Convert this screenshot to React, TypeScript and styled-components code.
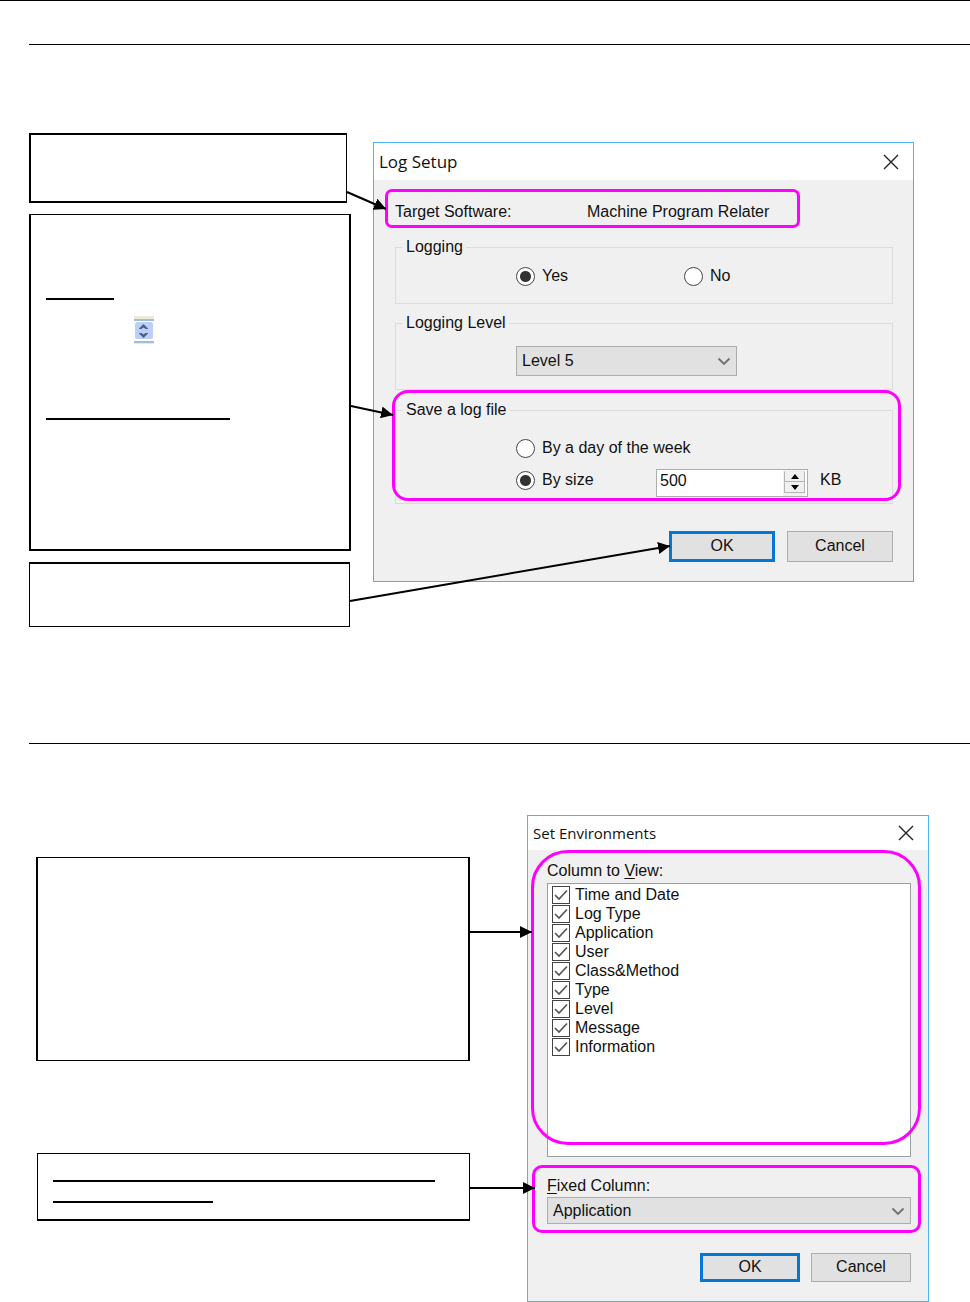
import React, { useId, useState } from 'react';
import styled, { createGlobalStyle } from 'styled-components';

const GlobalStyle = createGlobalStyle`
  *, *::before, *::after { box-sizing: border-box; }
  body {
    margin: 0;
    background: #fff;
    color: #111;
    font-family: "Liberation Sans", Arial, sans-serif;
    font-size: 16px;
    line-height: 22px;
  }
  button, input, select { font: inherit; color: inherit; margin: 0; }
`;

const Page = styled.main`
  border-top: 1px solid #000;
  padding: 43px 0 0 29px;
  overflow: hidden;
`;

const Section = styled.section<{ $gap: number }>`
  border-top: 1px solid #000;
  padding: ${p => p.$gap}px 0 0;
`;

const Stage = styled.div<{ $columns: string; $bottom: number }>`
  position: relative;
  display: grid;
  grid-template-columns: ${p => p.$columns};
  align-items: start;
  padding-bottom: ${p => p.$bottom}px;
`;

const Callouts = styled.div<{ $top: number; $gap: number; $right?: number }>`
  display: flex;
  flex-direction: column;
  align-items: ${p => (p.$right ? 'flex-end' : 'flex-start')};
  gap: ${p => p.$gap}px;
  padding: ${p => p.$top}px ${p => p.$right ?? 0}px 0 0;
`;

const Callout = styled.aside<{ $width: number; $height: number; $lines: string; $pad?: string }>`
  width: ${p => p.$width}px;
  min-height: ${p => p.$height}px;
  border: solid #000;
  border-width: ${p => p.$lines};
  padding: ${p => p.$pad ?? '0'};
  background: #fff;
`;

const Underline = styled.div<{ $width: number; $after: number }>`
  width: ${p => p.$width}px;
  height: 2px;
  margin-bottom: ${p => p.$after}px;
  background: #000;
`;

const SpinPicture = styled.svg`
  display: block;
  margin: 0 0 74px 88px;
`;

const Arrows = styled.svg`
  position: absolute;
  left: 0;
  top: 0;
  width: 100%;
  height: 100%;
  overflow: visible;
  pointer-events: none;
  z-index: 2;
`;

const Dialog = styled.form<{ $top: number }>`
  position: relative;
  margin-top: ${p => p.$top}px;
  border: 1px solid #4db2f0;
  background: #f0f0f0;
`;

const TitleBar = styled.header<{ $height: number }>`
  display: flex;
  align-items: center;
  justify-content: space-between;
  height: ${p => p.$height}px;
  padding: 0 14px 0 5px;
  background: #fff;
`;

const Title = styled.h2<{ $size: number }>`
  margin: 0;
  font: 400 ${p => p.$size}px/22px "Open Sans", "Noto Sans", sans-serif;
`;

const CloseButton = styled.button`
  display: flex;
  padding: 0;
  border: 0;
  background: none;
`;

const Body = styled.div<{ $pad: string }>`
  padding: ${p => p.$pad};
`;

const Highlight = styled.div<{ $box: string; $radius: number }>`
  position: absolute;
  inset: ${p => p.$box};
  border: 3px solid #f0f;
  border-radius: ${p => p.$radius}px;
  pointer-events: none;
  z-index: 1;
`;

const TargetRow = styled.div`
  display: grid;
  grid-template-columns: 192px 1fr;
  margin-bottom: 14px;
`;

const Group = styled.fieldset<{ $after: number }>`
  min-width: 0;
  margin: 0 0 ${p => p.$after}px;
  border: 1px solid #dcdcdc;
  padding: 0;
`;

const Legend = styled.legend`
  margin-left: 7px;
  padding: 0 3px;
  line-height: 20px;
`;

const GroupBody = styled.div<{ $top: number; $bottom: number }>`
  padding: ${p => p.$top}px 0 ${p => p.$bottom}px 120px;
`;

const OptionRow = styled.div`
  display: flex;
  & + & { margin-top: 10px; }
`;

const Option = styled.label<{ $width?: number }>`
  display: flex;
  align-items: center;
  gap: 7px;
  height: 22px;
  width: ${p => (p.$width ? p.$width + 'px' : 'auto')};
`;

const Radio = styled.input.attrs({ type: 'radio' })`
  appearance: none;
  width: 19px;
  height: 19px;
  border: 1px solid #444;
  border-radius: 50%;
  background: #fff;
  &:checked { background: radial-gradient(circle, #333 5px, #fff 6px); }
`;

const SelectFrame = styled.div<{ $width: string; $height: number }>`
  display: grid;
  align-items: center;
  width: ${p => p.$width};
  height: ${p => p.$height}px;
  & > * { grid-area: 1 / 1; }
  & > svg { justify-self: end; margin-right: 5px; pointer-events: none; }
`;

const Select = styled.select`
  appearance: none;
  width: 100%;
  height: 100%;
  padding: 0 24px 0 5px;
  border: 1px solid #adadad;
  border-radius: 0;
  background: #e1e1e1;
`;

const SizeField = styled.div`
  display: flex;
  width: 152px;
  height: 28px;
  border: 1px solid #abadb3;
  padding-right: 2px;
  background: #fff;
`;

const SizeInput = styled.input`
  flex: 1;
  min-width: 0;
  height: 22px;
  padding: 0 3px;
  border: 0;
  background: none;
`;

const Stepper = styled.div`
  display: flex;
  flex-direction: column;
  width: 22px;
  padding: 1px 0 3px 1px;
  background: #f0f0f0;
`;

const StepButton = styled.button`
  display: flex;
  flex: 1;
  align-items: center;
  justify-content: center;
  padding: 0;
  border: 1px solid #b4b4b4;
  border-top-color: #eee;
  background: #f0f0f0;
`;

const Unit = styled.span`
  margin-left: 12px;
`;

const Actions = styled.footer<{ $gap: number }>`
  display: flex;
  justify-content: flex-end;
  gap: ${p => p.$gap}px;
`;

const Button = styled.button<{ $width: number; $height: number; $primary?: boolean }>`
  width: ${p => p.$width}px;
  height: ${p => p.$height}px;
  padding: 0 0 2px;
  border: ${p => (p.$primary ? '3px solid #0078d7' : '1px solid #adadad')};
  background: #e1e1e1;
  line-height: 22px;
`;

const FieldLabel = styled.label`
  display: block;
  height: 22px;
`;

const FieldHeading = styled.div`
  height: 22px;
`;

const Key = styled.span`
  text-decoration: underline;
  text-underline-offset: 2px;
`;

const ColumnList = styled.ul`
  height: 274px;
  margin: 1px 0 18px;
  padding: 1px 4px;
  border: 1px solid #9a9ea5;
  background: #fff;
  list-style: none;
`;

const ColumnItem = styled.label`
  display: flex;
  align-items: center;
  gap: 5px;
  height: 19px;
  line-height: 19px;
`;

const CheckFrame = styled.span`
  display: grid;
  & > * { grid-area: 1 / 1; }
  & > svg { visibility: hidden; pointer-events: none; }
  & > input:checked + svg { visibility: visible; }
`;

const CheckInput = styled.input.attrs({ type: 'checkbox' })`
  appearance: none;
  width: 18px;
  height: 18px;
  border: 1px solid #444;
  background: #fff;
`;

const FixedColumn = styled.div`
  margin-bottom: 29px;
`;

const CloseGlyph = () => (
  <svg width="16" height="16" viewBox="0 0 16 16" fill="none" stroke="#222" strokeWidth="1.4">
    <path d="M1 1 15 15M15 1 1 15" />
  </svg>
);

const Chevron = () => (
  <svg width="16" height="10" viewBox="0 0 16 10" fill="none" stroke="#707070" strokeWidth="1.8">
    <path d="M2.500 2.500 8 8 13.500 2.500" />
  </svg>
);

function Arrow({ lines }: { lines: string[] }) {
  const id = useId();
  return (
    <Arrows aria-hidden="true">
      <defs>
        <marker id={id} markerUnits="userSpaceOnUse" markerWidth="12" markerHeight="12" refX="12" refY="6" orient="auto">
          <path d="M0 0 12 6 0 12Z" />
        </marker>
      </defs>
      {lines.map(d => (
        <path key={d} d={d} stroke="#000" strokeWidth="2" fill="none" markerEnd={`url(#${id})`} />
      ))}
    </Arrows>
  );
}

function DialogTitle({ children, height, size }: { children: string; height: number; size: number }) {
  return (
    <TitleBar $height={height}>
      <Title $size={size}>{children}</Title>
      <CloseButton type="button" aria-label="Close"><CloseGlyph /></CloseButton>
    </TitleBar>
  );
}

function LogSetup() {
  const [size, setSize] = useState(500);
  return (
    <Dialog $top={9} aria-label="Log Setup" onSubmit={e => e.preventDefault()}>
      <DialogTitle height={37} size={17}>Log Setup</DialogTitle>
      <Body $pad="21px 20px 19px 21px">
        <TargetRow>
          <span>Target Software:</span>
          <span>Machine Program Relater</span>
        </TargetRow>
        <Group $after={9}>
          <Legend>Logging</Legend>
          <GroupBody $top={8} $bottom={16}>
            <OptionRow>
              <Option $width={168}><Radio name="logging" defaultChecked />Yes</Option>
              <Option><Radio name="logging" />No</Option>
            </OptionRow>
          </GroupBody>
        </Group>
        <Group $after={10}>
          <Legend>Logging Level</Legend>
          <GroupBody $top={13} $bottom={13}>
            <SelectFrame $width="221px" $height={30}>
              <Select aria-label="Logging Level" defaultValue="Level 5">
                {[1, 2, 3, 4, 5].map(n => <option key={n}>{`Level ${n}`}</option>)}
              </Select>
              <Chevron />
            </SelectFrame>
          </GroupBody>
        </Group>
        <Group $after={27}>
          <Legend>Save a log file</Legend>
          <GroupBody $top={17} $bottom={6}>
            <OptionRow>
              <Option><Radio name="save" />By a day of the week</Option>
            </OptionRow>
            <OptionRow>
              <Option $width={140}><Radio name="save" defaultChecked />By size</Option>
              <SizeField>
                <SizeInput
                  aria-label="Log file size in KB"
                  value={size}
                  onChange={e => setSize(Number(e.target.value) || 0)}
                />
                <Stepper>
                  <StepButton type="button" aria-label="Increase" onClick={() => setSize(size + 1)}>
                    <svg width="8" height="5" viewBox="0 0 8 5"><path d="M4 0 8 5H0Z" /></svg>
                  </StepButton>
                  <StepButton type="button" aria-label="Decrease" onClick={() => setSize(size - 1)}>
                    <svg width="8" height="5" viewBox="0 0 8 5"><path d="M0 0H8L4 5Z" /></svg>
                  </StepButton>
                </Stepper>
              </SizeField>
              <Unit>KB</Unit>
            </OptionRow>
          </GroupBody>
        </Group>
        <Actions $gap={12}>
          <Button $width={106} $height={31} $primary>OK</Button>
          <Button $width={106} $height={31} type="button">Cancel</Button>
        </Actions>
      </Body>
      <Highlight $box="46px 113px 353px 11px" $radius={7} />
      <Highlight $box="247px 12px 80px 18px" $radius={16} />
    </Dialog>
  );
}

const columns = ['Time and Date', 'Log Type', 'Application', 'User', 'Class&Method', 'Type', 'Level', 'Message', 'Information'];

function SetEnvironments() {
  return (
    <Dialog $top={0} aria-label="Set Environments" onSubmit={e => e.preventDefault()}>
      <DialogTitle height={34} size={15}>Set Environments</DialogTitle>
      <Body $pad="10px 17px 19px 19px">
        <FieldHeading>Column to <Key>V</Key>iew:</FieldHeading>
        <ColumnList>
          {columns.map(name => (
            <li key={name}>
              <ColumnItem>
                <CheckFrame>
                  <CheckInput defaultChecked />
                  <svg width="18" height="18" viewBox="0 0 18 18" fill="none" stroke="#555" strokeWidth="1.7">
                    <path d="M3 9 7 13 15 4.500" />
                  </svg>
                </CheckFrame>
                {name}
              </ColumnItem>
            </li>
          ))}
        </ColumnList>
        <FixedColumn>
          <FieldLabel htmlFor="fixed-column"><Key>F</Key>ixed Column:</FieldLabel>
          <SelectFrame $width="100%" $height={27}>
            <Select id="fixed-column" defaultValue="Application">
              {columns.map(name => <option key={name}>{name}</option>)}
            </Select>
            <Chevron />
          </SelectFrame>
        </FixedColumn>
        <Actions $gap={11}>
          <Button $width={100} $height={29} $primary>OK</Button>
          <Button $width={100} $height={29} type="button">Cancel</Button>
        </Actions>
      </Body>
      <Highlight $box="34px 7px 156px 3px" $radius={37} />
      <Highlight $box="349px 7px 68px 4px" $radius={10} />
    </Dialog>
  );
}

export default function App() {
  return (
    <>
      <GlobalStyle />
      <Page>
        <Section $gap={88}>
          <Stage $columns="344px 541px" $bottom={116}>
            <Callouts $top={0} $gap={11}>
              <Callout $width={318} $height={70} $lines="2px 1px 2px 2px" />
              <Callout $width={322} $height={337} $lines="1px 2px 2px 2px" $pad="83px 0 0 15px">
                <Underline $width={68} $after={16} />
                <SpinPicture width="20" height="28" viewBox="0 0 20 28" aria-hidden="true">
                  <path fill="#ece9d8" d="M0 0h20v3H0zM0 27h20v1H0z" />
                  <path fill="#a5bdcf" d="M0 3h20v2H0zM0 25h20v2H0z" />
                  <rect x="1" y="6" width="18" height="17" rx="2" fill="#bccffb" />
                  <path fill="#4d6185" d="M9.500 8 14 12.500V13H11.500L9.500 11.500 7.500 13H5V12.500ZM9.500 22 14 17.500V17H11.500L9.500 18.500 7.500 17H5V17.500Z" />
                </SpinPicture>
                <Underline $width={184} $after={0} />
              </Callout>
              <Callout $width={321} $height={65} $lines="2px 1px 1px 1px" />
            </Callouts>
            <LogSetup />
            <Arrow lines={['M318 59 357 76', 'M322 273 364 282', 'M321 468 641 413']} />
          </Stage>
        </Section>
        <Section $gap={71}>
          <Stage $columns="498px 402px" $bottom={0}>
            <Callouts $top={42} $gap={92} $right={57}>
              <Callout $width={434} $height={204} $lines="1px 2px" />
              <Callout $width={433} $height={68} $lines="1px 1px 2px 1px" $pad="26px 0 0 15px">
                <Underline $width={382} $after={19} />
                <Underline $width={160} $after={0} />
              </Callout>
            </Callouts>
            <SetEnvironments />
            <Arrow lines={['M441 117H503', 'M441 373H506']} />
          </Stage>
        </Section>
      </Page>
    </>
  );
}
